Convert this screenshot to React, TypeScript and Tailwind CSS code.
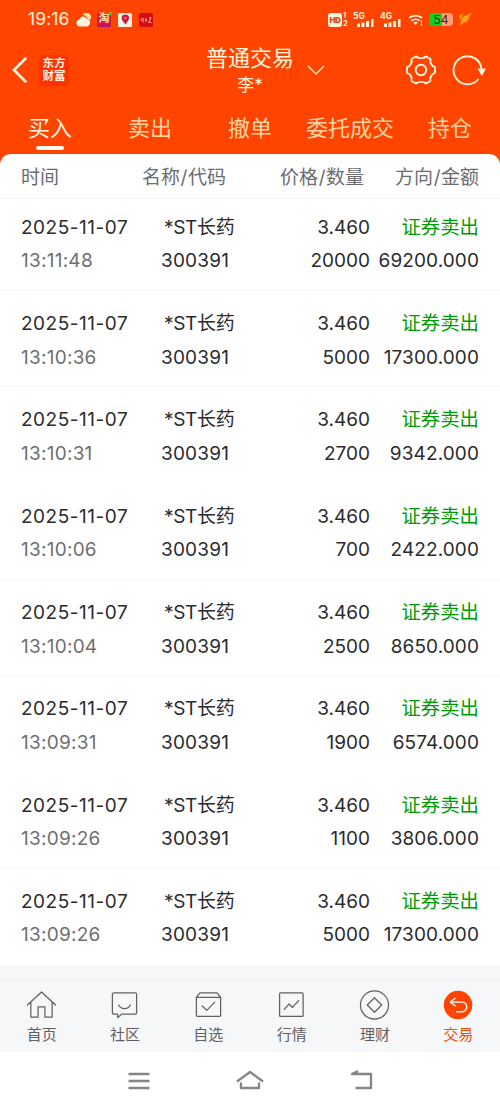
import type { ReactNode } from 'react';

interface Trade {
  date: string;
  time: string;
  name: string;
  code: string;
  price: string;
  quantity: string;
  side: string;
  amount: string;
  divider: boolean;
}

const base = { date: '2025-11-07', name: '*ST长药', code: '300391', price: '3.460', side: '证券卖出' };

const TRADES: Trade[] = [
  { ...base, time: '13:11:48', quantity: '20000', amount: '69200.000', divider: true },
  { ...base, time: '13:10:36', quantity: '5000', amount: '17300.000', divider: true },
  { ...base, time: '13:10:31', quantity: '2700', amount: '9342.000', divider: false },
  { ...base, time: '13:10:06', quantity: '700', amount: '2422.000', divider: true },
  { ...base, time: '13:10:04', quantity: '2500', amount: '8650.000', divider: true },
  { ...base, time: '13:09:31', quantity: '1900', amount: '6574.000', divider: false },
  { ...base, time: '13:09:26', quantity: '1100', amount: '3806.000', divider: true },
  { ...base, time: '13:09:26', quantity: '5000', amount: '17300.000', divider: false },
];

const TABS = [
  { label: '买入', active: true },
  { label: '卖出' },
  { label: '撤单' },
  { label: '委托成交' },
  { label: '持仓' },
];

const NAV_ITEMS: { label: string; icon: ReactNode; active?: boolean }[] = [
  {
    label: '首页',
    icon: <path d="M1.500 15.500 16 2l14.500 13.500M5 12.500V28h7.500V17.500h7V28H27V12.500" />,
  },
  {
    label: '社区',
    icon: (
      <>
        <path d="M5 3h22a1.500 1.500 0 0 1 1.500 1.500v19A1.500 1.500 0 0 1 27 25H13l-4 3.500V25H5a1.500 1.500 0 0 1-1.500-1.500v-19A1.500 1.500 0 0 1 5 3Z" />
        <path d="M10 15.500c2.500 5 9.500 5 12 0" />
      </>
    ),
  },
  {
    label: '自选',
    icon: (
      <>
        <path d="M3.500 7.500h25v18.500a1.200 1.200 0 0 1-1.200 1.200H4.700A1.200 1.200 0 0 1 3.500 26ZM3.500 7.500l3.700-4.500h17.600l3.700 4.500" />
        <path d="m9.500 16.500 4.700 4.500 8.300-8.500" />
      </>
    ),
  },
  {
    label: '行情',
    icon: (
      <>
        <rect x="3.700" y="3" width="24.300" height="24.200" rx="1" />
        <path d="m8.500 20 5-5.500 3.500 3.500 6.500-7" />
      </>
    ),
  },
  {
    label: '理财',
    icon: (
      <>
        <circle cx="16" cy="15.500" r="14.500" />
        <path d="m16 8 7.500 7.500L16 23l-7.500-7.500Z" />
      </>
    ),
  },
  {
    label: '交易',
    active: true,
    icon: (
      <>
        <circle cx="15.500" cy="15.500" r="14.700" fill="#ff4400" stroke="none" />
        <path stroke="#ffffff" strokeWidth="1.500" d="M12.500 8.500 7.500 12.500l5.500 4M7.500 12.500h12a5 5 0 0 1 0 10H14" />
      </>
    ),
  },
];

function Signal({ label }: { label: string }) {
  return (
    <div className="relative h-[16px] w-[21px]">
      <span className="absolute left-0 top-0 text-[8.5px] font-bold leading-[8px]">{label}</span>
      <svg className="absolute bottom-[1px] right-0" width="17" height="9" fill="currentColor">
        <path d="M0 5.500h3V9H0zM4.500 4.500h3V9h-3zM9 3h3v6H9zM14 1h2.500v8H14z" />
      </svg>
    </div>
  );
}

function StatusBar() {
  return (
    <div className="flex h-[39px] items-center text-[#fff3dc]">
      <span className="ml-[28px] w-[48px] text-[17.5px] tracking-[0.1px]">19:16</span>
      <svg width="15" height="14" viewBox="0 0 15 14" fill="currentColor">
        <path d="M3.500 13.500a3.500 3.500 0 0 1-.3-6.900 4 4 0 0 1 7.300-1.100A4.100 4.100 0 0 1 11 13.500Z" />
        <path d="M7 1.700a4.300 4.300 0 0 1 7.300 4.600c-.2.400-.5.800-.8 1.100-.5-1.200-1.300-2-2.500-2.400C10.200 3.200 8.900 2.100 7 1.700Z" fill="#ffdfae" />
      </svg>
      <div className="relative ml-[6px] h-[14px] w-[14px] rounded-[2px] bg-[#d7154c]">
        <span className="absolute left-[1.5px] top-0 text-[11px] font-bold leading-[11px] text-[#ffe3a0]">淘</span>
        <span className="absolute bottom-0 left-[2px] h-[2px] w-[10px] bg-[#a91590]" />
        <span className="absolute -right-[1px] -top-[1px] h-[3px] w-[3px] bg-[#5cc02c]" />
      </div>
      <svg className="ml-[7px]" width="14" height="14" viewBox="0 0 14 14">
        <rect width="14" height="14" rx="1.500" fill="#fdf0e4" />
        <path d="M7.300 1.500a3.700 3.700 0 0 1 3.700 3.700C11 7.500 8.800 8.700 7.500 11.500 6 8.700 3.600 7.500 3.600 5.200a3.700 3.700 0 0 1 3.700-3.700Z" fill="#cf1238" />
        <path d="M5.500 5h3.500M7.300 3.700v3" stroke="#ef7187" strokeWidth="1" />
      </svg>
      <svg className="ml-[7px]" width="14" height="14" viewBox="0 0 14 14" fill="none">
        <rect width="14" height="14" rx="2" fill="#d60b12" />
        <path d="m3 5-1 3M5 5.500H4v4M7 5v4M6 7h2M10 5l2-.5-1 2.500-1.500 2.500h3" stroke="#ffb9a5" strokeWidth=".9" />
      </svg>

      <div className="ml-auto flex items-center">
        <span className="flex h-[14px] w-[14px] items-center justify-center rounded-[3px] bg-current">
          <span className="text-[8px] font-black tracking-[-0.3px] text-[#df4814]">HD</span>
        </span>
        <span className="ml-[1px] flex w-[6px] flex-col text-[7.5px] font-bold leading-[7.5px]">
          <span>1</span>
          <span>2</span>
        </span>
        <div className="ml-[4px]">
          <Signal label="5G" />
        </div>
        <div className="ml-[6px]">
          <Signal label="4G" />
        </div>
        <svg className="ml-[7px]" width="16" height="13" viewBox="0 0 16 13" fill="none" stroke="currentColor" strokeWidth="1.800">
          <path d="M1 5c3.500-3.300 9.500-3.300 13 0M3.500 7.800c2.300-2 5.700-2 8 0" />
          <path d="m5.500 9.500 2 2.500 2-2.500c-1.200-1-2.800-1-4 0Z" fill="currentColor" stroke="none" />
          <path d="M13.500 7.500v2M13.500 10.500v2" strokeWidth="1.300" />
        </svg>
        <span className="ml-[5px] flex h-[13px] w-[24px] items-center justify-center rounded-[4px] bg-linear-to-r from-[#12cf24] from-54% to-[#ff9d7c] to-54% text-[12px] leading-[13px] text-[#4a2a10]">
          54
        </span>
        <svg className="ml-[5px] mr-[28px]" width="14" height="13" viewBox="0 0 14 13" fill="#ffa51f">
          <path d="M1 3 5 .5 3 8Z" />
          <path d="M1.500 12.500 5.500 3.500 14 0 10.500 4.500 7.500 5.500l4-.5L8.500 9 6 9.500Z" />
        </svg>
      </div>
    </div>
  );
}

function Header() {
  return (
    <div className="flex h-[62px] items-center text-[#fff3dc]">
      <svg className="ml-[12px]" width="17" height="26" viewBox="0 0 17 26" fill="none" stroke="currentColor" strokeWidth="2.700" strokeLinecap="round">
        <path d="M13.500 1.500 2 13 13.500 24.500" />
      </svg>
      <div className="ml-[10px] flex h-[31px] w-[30px] flex-col items-center justify-center rounded-[5px] bg-[#fc3206] text-[11.5px] font-bold leading-[13px]">
        <span>东方</span>
        <span>财富</span>
      </div>
      <div className="ml-[136px] flex w-[90px] flex-col items-center">
        <span className="whitespace-nowrap text-[22px] leading-[30px]">普通交易</span>
        <span className="text-[17px] leading-[24px]">李*</span>
      </div>
      <svg className="ml-[12px]" width="18" height="11" viewBox="0 0 18 11" fill="none" stroke="#ffe2b8" strokeWidth="1.500">
        <path d="m1 1 8 8 8-8" />
      </svg>
      <svg className="ml-[80px]" width="32" height="32" viewBox="0 0 32 32" fill="none" stroke="currentColor" strokeWidth="1.900" strokeLinejoin="round">
        <path d="M11 2.500C13 4.700 19 4.700 21 2.500L25.500 5C24.500 8.500 26.500 12.300 30 13.200V18.800C26.500 19.700 24.500 23.500 25.500 27L21 29.500C19 27.300 13 27.300 11 29.500L6.500 27C7.500 23.500 5.500 19.700 2 18.800V13.200C5.500 12.300 7.500 8.500 6.500 5Z" />
        <circle cx="16" cy="16" r="5.300" />
      </svg>
      <svg className="ml-[15px]" width="34" height="32" viewBox="0 0 34 32" fill="none" stroke="currentColor" strokeWidth="1.900">
        <path d="M26.500 25A14 14 0 1 1 29.500 15" />
        <path d="M25.500 14.500h8.500l-4.200 7.500Z" fill="currentColor" stroke="none" />
      </svg>
    </div>
  );
}

function TabBar() {
  return (
    <div className="flex h-[53px]">
      {TABS.map((tab) => (
        <div key={tab.label} className="flex w-[100px] flex-col items-center pt-[11px]">
          <span
            className={`whitespace-nowrap text-[22px] leading-[32px] ${tab.active ? 'text-[#fff6e0]' : 'text-[#ffd3a2]'}`}
          >
            {tab.label}
          </span>
          {tab.active && <span className="mt-[2px] h-1 w-7 rounded-full bg-[#fffaf0]" />}
        </div>
      ))}
    </div>
  );
}

function TradeRow({ trade }: { trade: Trade }) {
  return (
    <div
      className={`flex h-[96.300px] border-b px-[21px] pt-[16.500px] text-[19px] leading-[33.500px] text-[#2b2b2d] ${
        trade.divider ? 'border-[#f4f4f5]' : 'border-transparent'
      }`}
    >
      <div className="flex w-[140px] flex-col">
        <span className="tracking-[0.52px]">{trade.date}</span>
        <span className="tracking-[0.25px] text-[#6f6f71]">{trade.time}</span>
      </div>
      <div className="flex w-[80px] flex-col">
        <span className="pl-[3px] tracking-[-0.3px]">{trade.name}</span>
        <span className="tracking-[0.2px]">{trade.code}</span>
      </div>
      <div className="flex w-[129px] flex-col items-end">
        <span>{trade.price}</span>
        <span>{trade.quantity}</span>
      </div>
      <div className="flex flex-1 flex-col items-end">
        <span className="whitespace-nowrap text-[19.400px] text-[#009c06]">{trade.side}</span>
        <span className="tracking-[0.1px]">{trade.amount}</span>
      </div>
    </div>
  );
}

function BottomNav() {
  return (
    <nav className="flex h-[72px] border-t border-[#ebecee] bg-[#f6f7f9]">
      {NAV_ITEMS.map((item) => (
        <div key={item.label} className="flex flex-1 flex-col items-center pt-[9px]">
          <svg
            width="31"
            height="31"
            viewBox="0 0 32 32"
            fill="none"
            stroke="#626266"
            strokeWidth="1.300"
            strokeLinecap="round"
            strokeLinejoin="round"
          >
            {item.icon}
          </svg>
          <span className={`mt-[3px] text-[15px] leading-[22px] ${item.active ? 'text-[#ee4d0c]' : 'text-[#5f5f63]'}`}>
            {item.label}
          </span>
        </div>
      ))}
    </nav>
  );
}

function SystemBar() {
  return (
    <div className="flex h-[59px] justify-between bg-white pl-[127px] pr-[127px] pt-[17px]">
      <svg width="24" height="24" fill="none" stroke="#858585" strokeWidth="2.300">
        <path d="M1.500 5h21M1.500 12h21M1.500 19h21" />
      </svg>
      <svg width="28" height="24" viewBox="0 0 28 24" fill="none" stroke="#858585" strokeWidth="2.300" strokeLinejoin="round">
        <path d="M1 12.500 14 3l13 9.500M5 13.500V19h18v-5.500" />
      </svg>
      <svg width="24" height="24" fill="none" stroke="#858585" strokeWidth="2.300" strokeLinejoin="round">
        <path d="M9 2 3 5h19v14H6.500" />
      </svg>
    </div>
  );
}

export default function App() {
  return (
    <div className="flex h-[1111px] w-[500px] flex-col overflow-hidden bg-[#ff4400] font-['Inter','Noto_Sans_CJK_SC',sans-serif]">
      <StatusBar />
      <Header />
      <TabBar />
      <main className="flex flex-1 flex-col rounded-t-[11px] bg-white">
        <div className="flex h-[45px] items-center border-b border-[#f4f4f5] px-[21px] pt-[5px] text-[19px] text-[#6c6c70]">
          <span className="w-[121px]">时间</span>
          <span className="w-[85px] whitespace-nowrap">
            名称<span className="px-[0.500px]">/</span>代码
          </span>
          <span className="w-[137px] whitespace-nowrap text-right">
            价格<span className="px-[0.500px]">/</span>数量
          </span>
          <span className="flex-1 whitespace-nowrap text-right">
            方向<span className="px-[0.500px]">/</span>金额
          </span>
        </div>
        <div className="-mt-[4.700px]">
          {TRADES.map((trade, index) => (
            <TradeRow key={index} trade={trade} />
          ))}
        </div>
        <div className="flex-1 bg-[#f6f7f9]" />
      </main>
      <BottomNav />
      <SystemBar />
    </div>
  );
}
